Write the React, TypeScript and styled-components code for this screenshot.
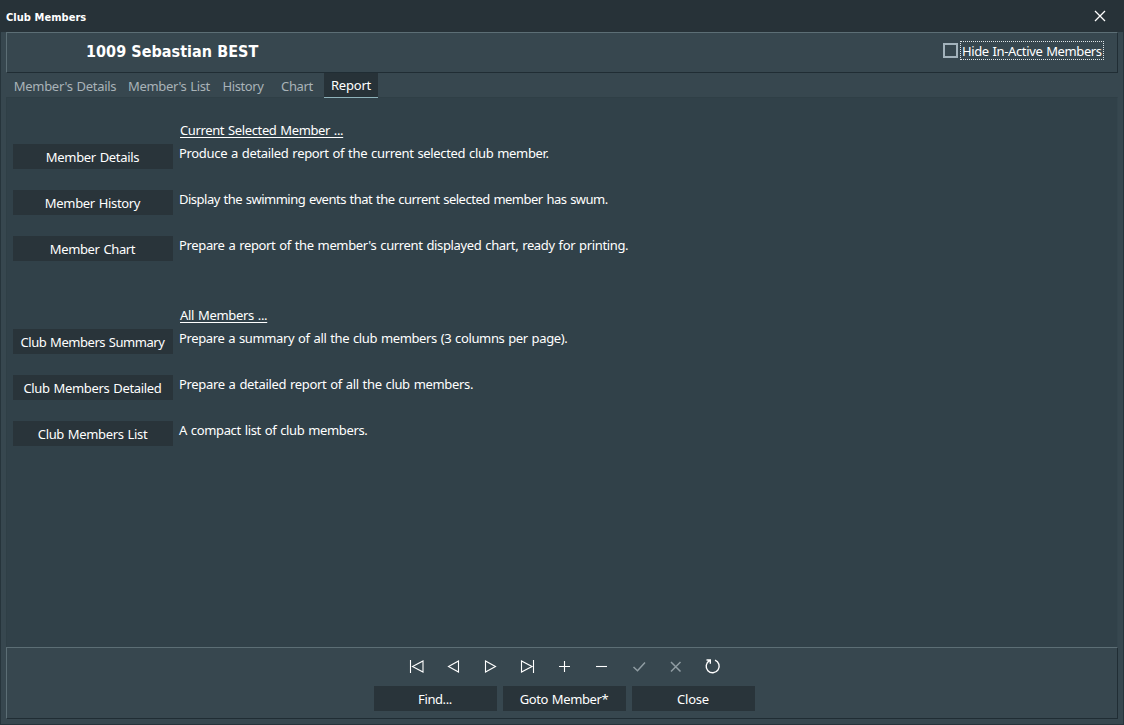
import React from "react";
import styled, { createGlobalStyle } from "styled-components";

const GlobalStyle = createGlobalStyle`
  *, *::before, *::after { box-sizing: border-box; }
  body { margin: 0; background: #37474f; }
`;

const Window = styled.div`
  width: 1124px;
  height: 725px;
  display: flex;
  flex-direction: column;
  background: #37474f;
  color: #fff;
  font: 13px/18px "Noto Sans", "Open Sans", sans-serif;
  word-spacing: 0.8px;
  overflow: hidden;
`;

const TitleBar = styled.header`
  height: 32px;
  flex: none;
  display: flex;
  align-items: center;
  justify-content: space-between;
  padding: 0 18px 0 6px;
  background: #273238;
`;

const WindowTitle = styled.span`
  padding-top: 3px;
  font-family: "DejaVu Sans Condensed", "DejaVu Sans", sans-serif;
  font-stretch: condensed;
  font-size: 11px;
  font-weight: 700;
  letter-spacing: 0.05px;
  word-spacing: 0;
`;

const CloseIcon = styled.svg`
  width: 12px;
  height: 12px;
  display: block;
`;

const Frame = styled.main`
  flex: 1;
  display: flex;
  flex-direction: column;
  padding: 0 5px 5px;
  border: 1px solid #26343b;
  border-top: 0;
`;

const Panel = styled.section`
  border: 1px solid #5c6e75;
  border-right-color: #202d34;
  border-bottom-color: #202d34;
`;

const MemberPanel = styled(Panel)`
  height: 41px;
  display: flex;
  align-items: flex-start;
  justify-content: space-between;
  padding: 8px 13px 0 79px;
`;

const MemberName = styled.h1`
  margin: 1px 0 0;
  font-family: "DejaVu Sans Condensed", "DejaVu Sans", sans-serif;
  font-stretch: condensed;
  font-size: 16px;
  line-height: 20px;
  font-weight: 700;
  letter-spacing: 0.04px;
  word-spacing: 0;
  white-space: nowrap;
`;

const CheckOption = styled.label`
  display: flex;
  align-items: flex-start;
  height: 19px;
  gap: 2px;
`;

const CheckBox = styled.span`
  width: 15px;
  height: 15px;
  margin-top: 2px;
  border: 2px solid #a3b3bc;
`;

const CheckLabel = styled.span`
  width: 144px;
  height: 19px;
  padding-left: 1px;
  border: 1px dotted #dfe5e8;
  line-height: 18px;
  white-space: nowrap;
  letter-spacing: -0.38px;
`;

const Tabs = styled.nav`
  display: flex;
  height: 25px;
  padding-left: 2px;
`;

const Tab = styled.div<{ $width: number; $active?: boolean; $spacing: number }>`
  position: relative;
  width: ${(p) => p.$width}px;
  height: 25px;
  text-align: center;
  white-space: nowrap;
  line-height: ${(p) => (p.$active ? 25 : 27)}px;
  letter-spacing: ${(p) => p.$spacing}px;
  color: ${(p) => (p.$active ? "#fff" : "#a9b3b8")};
  background: ${(p) => (p.$active ? "#273238" : "transparent")};
  border-bottom: ${(p) => (p.$active ? "1px solid #8fb3bb" : "0")};
`;

const Content = styled.section`
  height: 550px;
  margin-top: -1px;
  padding: 23px 6px 0;
  background: #314149;
  border: 1px solid #2f3f46;
  border-bottom: 0;
  border-right: 1px solid #34454d;
`;

const Group = styled.section`
  height: 185px;
`;

const GroupTitle = styled.h2<{ $spacing: number }>`
  margin: 0 0 5px 167px;
  height: 18px;
  width: fit-content;
  font-size: 13px;
  font-weight: 400;
  line-height: 18px;
  letter-spacing: ${(p) => p.$spacing}px;
  text-decoration: underline;
  text-decoration-thickness: 1px;
  text-underline-offset: 2px;
  text-decoration-skip-ink: none;
`;

const ReportRow = styled.div`
  display: flex;
  gap: 6px;
  height: 46px;
`;

const Button = styled.button<{ $width: number; $spacing: number }>`
  width: ${(p) => p.$width}px;
  height: 25px;
  padding: 0 1px 0 0;
  border: 0;
  background: #29343a;
  color: #fff;
  font: inherit;
  line-height: 26px;
  letter-spacing: ${(p) => p.$spacing}px;
  word-spacing: inherit;
  white-space: nowrap;
`;

const Description = styled.span<{ $spacing: number }>`
  line-height: 18px;
  letter-spacing: ${(p) => p.$spacing}px;
  white-space: nowrap;
`;

const Footer = styled(Panel)`
  height: 72px;
`;

const Navigator = styled.div`
  display: flex;
  height: 38px;
  padding: 0 0 2px 392px;
  align-items: center;
`;

const NavButton = styled.span<{ $dim?: boolean }>`
  width: 37px;
  height: 36px;
  display: flex;
  align-items: center;
  padding-left: 9px;
  color: ${(p) => (p.$dim ? "#909da3" : "#fff")};
  svg {
    width: 18px;
    height: 18px;
    fill: none;
    stroke: currentColor;
    stroke-width: ${(p) => (p.$dim ? 1.5 : 1.1)};
  }
`;

const Actions = styled.div`
  display: flex;
  gap: 6px;
  padding-left: 367px;
`;

type Report = { label: string; labelSpacing: number; text: string; spacing: number };

const groups: { title: string; spacing: number; rows: Report[] }[] = [
  {
    title: "Current Selected Member ...",
    spacing: -0.37,
    rows: [
      { label: "Member Details", labelSpacing: -0.33, text: "Produce a detailed report of the current selected club member.", spacing: -0.33 },
      { label: "Member History", labelSpacing: -0.33, text: "Display the swimming events that the current selected member has swum.", spacing: -0.5 },
      { label: "Member Chart", labelSpacing: -0.37, text: "Prepare a report of the member's current displayed chart, ready for printing.", spacing: -0.35 },
    ],
  },
  {
    title: "All Members ...",
    spacing: -0.32,
    rows: [
      { label: "Club Members Summary", labelSpacing: -0.45, text: "Prepare a summary of all the club members (3 columns per page).", spacing: -0.37 },
      { label: "Club Members Detailed", labelSpacing: -0.33, text: "Prepare a detailed report of all the club members.", spacing: -0.33 },
      { label: "Club Members List", labelSpacing: -0.34, text: "A compact list of club members.", spacing: -0.35 },
    ],
  },
];

const navIcons = [
  { d: "M2.5 3V16M15 4V15L4.5 9.5Z" },
  { d: "M13.5 4V15L3.5 9.5Z" },
  { d: "M3.5 4V15L13.5 9.5Z" },
  { d: "M2.5 4V15L13 9.5ZM14.5 3V16" },
  { d: "M8.5 4V15M3 9.5H14" },
  { d: "M3 9.5H14" },
  { d: "M3.5 10L7.5 13.8L15 5.5", dim: true },
  { d: "M4 5L13.5 14.5M13.5 5L4 14.5", dim: true },
  { d: "M11 3.2A6.5 6.5 0 1 1 5.5 3.6M2.5 3H6.3V6.8", bold: true },
];

export default function App() {
  return (
    <>
      <GlobalStyle />
      <Window>
        <TitleBar>
          <WindowTitle>Club Members</WindowTitle>
          <CloseIcon viewBox="0 0 12 12" stroke="#fff" strokeWidth="1.3">
            <path d="M1 1L11 11M11 1L1 11" />
          </CloseIcon>
        </TitleBar>
        <Frame>
          <MemberPanel>
            <MemberName>1009 Sebastian BEST</MemberName>
            <CheckOption>
              <CheckBox />
              <CheckLabel>Hide In-Active Members</CheckLabel>
            </CheckOption>
          </MemberPanel>
          <Tabs>
            <Tab $width={114} $spacing={-0.3}>Member's Details</Tab>
            <Tab $width={94} $spacing={-0.36}>Member's List</Tab>
            <Tab $width={54} $spacing={-0.4}>History</Tab>
            <Tab $width={54} $spacing={-0.35}>Chart</Tab>
            <Tab $width={54} $spacing={-0.2} $active>Report</Tab>
          </Tabs>
          <Content>
            {groups.map((group) => (
              <Group key={group.title}>
                <GroupTitle $spacing={group.spacing}>{group.title}</GroupTitle>
                {group.rows.map((row) => (
                  <ReportRow key={row.label}>
                    <Button $width={160} $spacing={row.labelSpacing}>{row.label}</Button>
                    <Description $spacing={row.spacing}>{row.text}</Description>
                  </ReportRow>
                ))}
              </Group>
            ))}
          </Content>
          <Footer>
            <Navigator>
              {navIcons.map((icon) => (
                <NavButton key={icon.d} $dim={icon.dim}>
                  <svg viewBox="0 0 18 18">
                    <path d={icon.d} strokeWidth={icon.bold ? 1.4 : undefined} />
                  </svg>
                </NavButton>
              ))}
            </Navigator>
            <Actions>
              <Button $width={123} $spacing={-0.4}>Find...</Button>
              <Button $width={123} $spacing={-0.4}>Goto Member*</Button>
              <Button $width={123} $spacing={-0.2}>Close</Button>
            </Actions>
          </Footer>
        </Frame>
      </Window>
    </>
  );
}
